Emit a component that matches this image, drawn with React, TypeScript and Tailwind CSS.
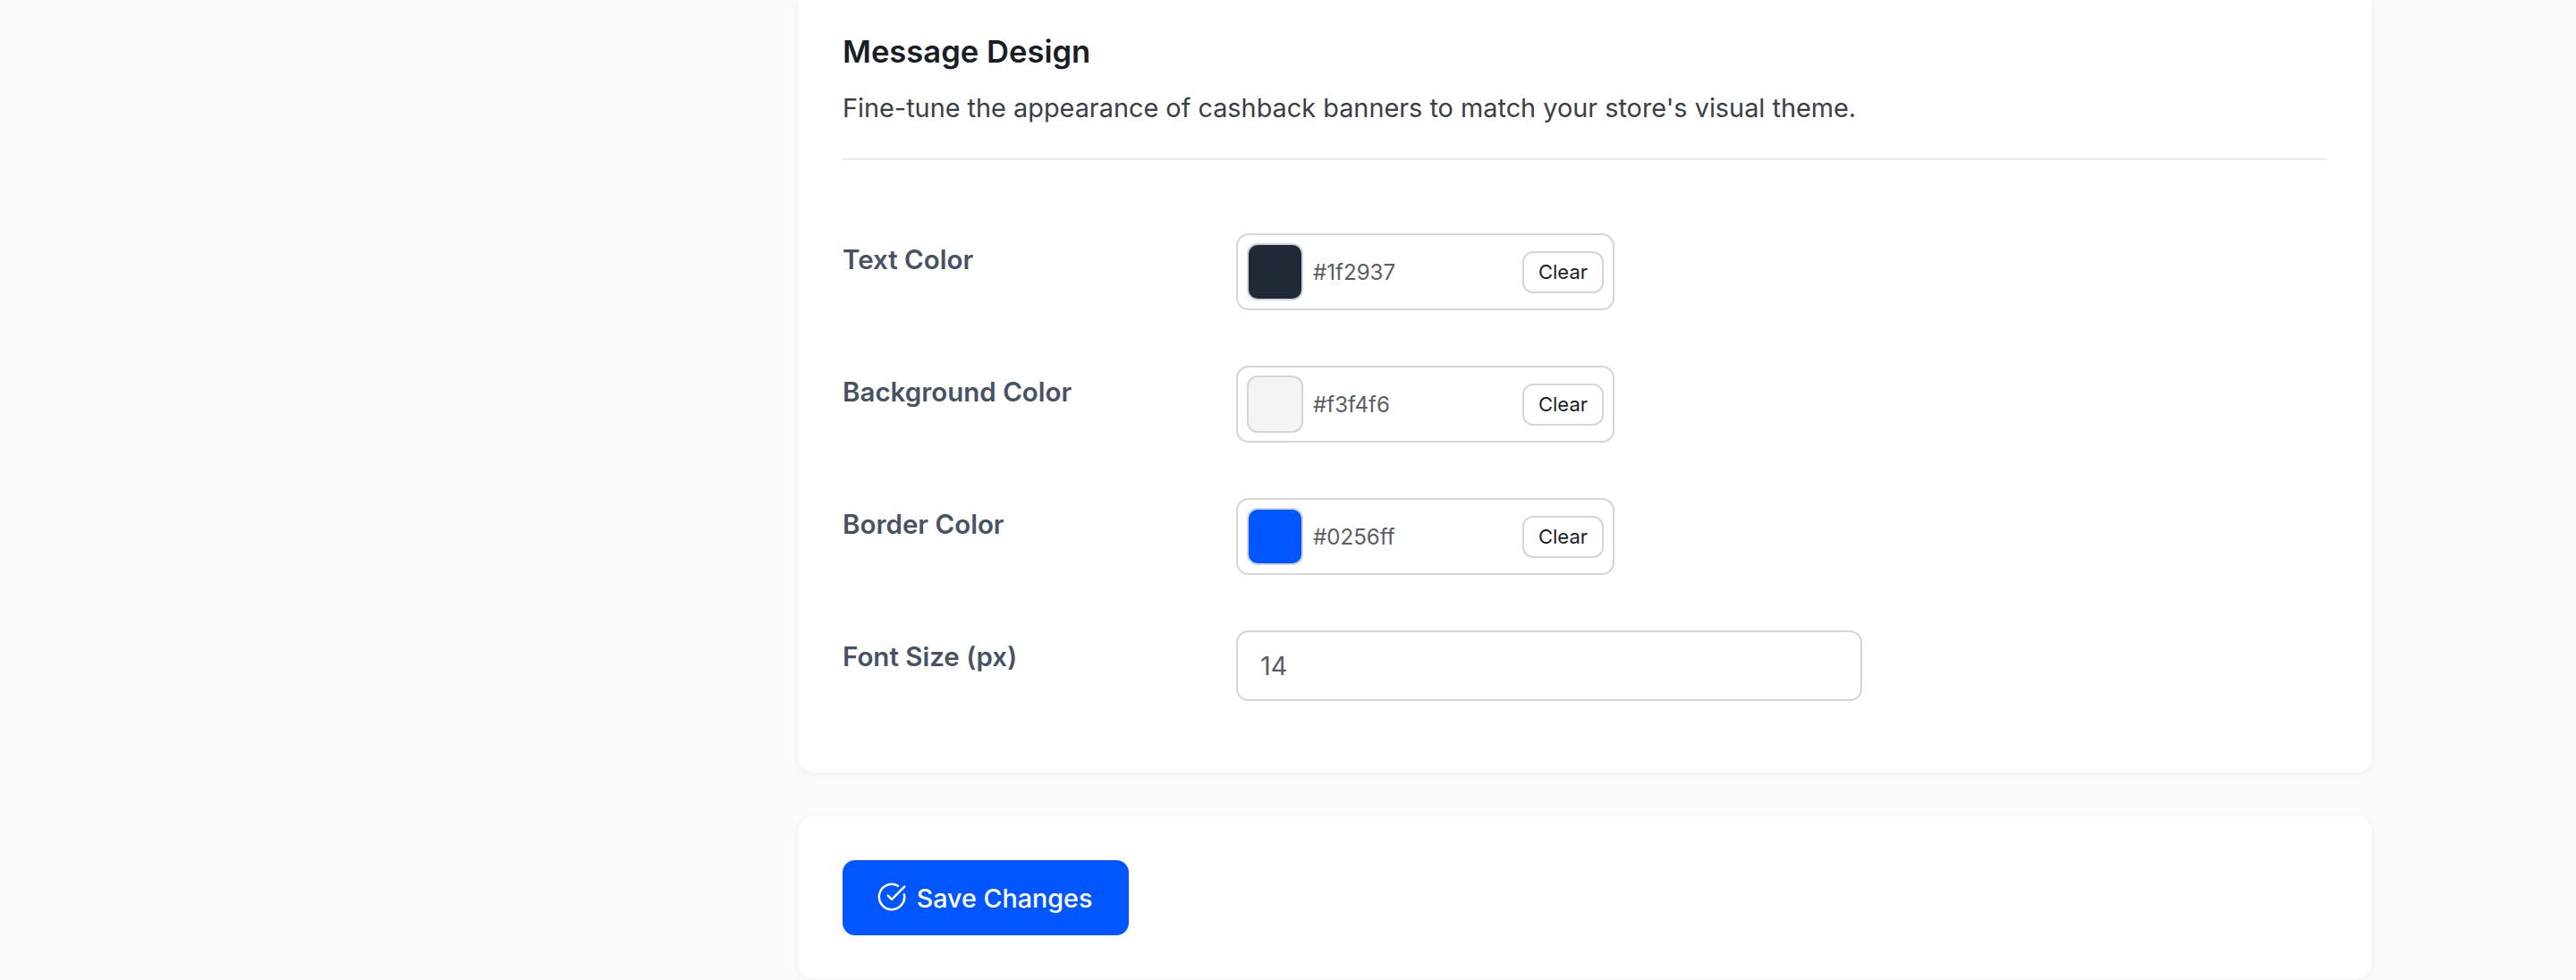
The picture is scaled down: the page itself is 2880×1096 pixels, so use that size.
import { CircleCheckBig } from 'lucide-react';

const COLOR_ROWS = [
  { label: 'Text Color', value: '#1f2937', swatch: 'bg-[#1f2937]' },
  { label: 'Background Color', value: '#f3f4f6', swatch: 'bg-[#f3f4f6]' },
  { label: 'Border Color', value: '#0256ff', swatch: 'bg-[#0256ff]' },
];

const FONT = "font-['Inter',sans-serif]";

function FieldLabel({ children }: { children: string }) {
  return (
    <label className="block w-[440px] shrink-0 pt-[9px] text-[29.5px] leading-[40px] font-semibold text-[#475264]">
      {children}
    </label>
  );
}

export default function App() {
  return (
    <div className={`h-[1096px] overflow-hidden bg-[#f9fbfc] pl-[892px] ${FONT}`}>
      <div className="flex w-[1760px] flex-col gap-[49px]">
        {/* Design settings */}
        <section className="rounded-b-[18px] bg-white pt-[34px] pr-[51px] pb-[80px] pl-[50px] shadow-[0_2px_8px_rgba(0,0,0,0.05)]">
          <h2 className="text-[34.6px] leading-[46px] font-semibold text-[#1a1f26]">Message Design</h2>
          <p className="mt-[17px] text-[28.85px] leading-[48px] text-[#3a3f47]">
            Fine-tune the appearance of cashback banners to match your store's visual theme.
          </p>
          <div className="mt-[32px] h-[2px] bg-[#e9ebee]" />

          <div className="mt-[82px] flex flex-col gap-[62px]">
            {COLOR_ROWS.map((row) => (
              <div key={row.label} className="flex items-start">
                <FieldLabel>{row.label}</FieldLabel>
                <div className="flex h-[86px] w-[423px] items-center rounded-[14px] border-2 border-[#d4d5d7] bg-white px-[10px]">
                  <div className={`h-[64px] w-[63px] rounded-[12px] border-2 border-[#d1d5db] ${row.swatch}`} />
                  <span className="mt-[2px] ml-[11px] text-[24.1px] text-[#5a5d63]">{row.value}</span>
                  <button className="ml-auto h-[47px] w-[91px] rounded-[12px] border-2 border-[#d4d5d7] bg-white text-[22px] text-[#1a1f26]">
                    Clear
                  </button>
                </div>
              </div>
            ))}
            <div className="flex items-start">
              <FieldLabel>Font Size (px)</FieldLabel>
              <input
                readOnly
                value="14"
                className="h-[79px] w-[700px] rounded-[14px] border-2 border-[#d4d5d7] bg-white px-[25px] text-[28.85px] text-[#5a5d63] outline-none"
              />
            </div>
          </div>
        </section>

        {/* Save bar */}
        <section className="rounded-[18px] bg-white py-[49px] pr-[51px] pl-[50px] shadow-[0_2px_8px_rgba(0,0,0,0.05)]">
          <button className="flex h-[84px] w-[320px] items-center justify-center gap-[11px] rounded-[14px] bg-[#0256ff] pr-[3px] text-[28.7px] font-medium text-white">
            <CircleCheckBig className="mb-[2px] h-[34px] w-[34px]" strokeWidth={1.75} />
            <span className="mt-[2px]">Save Changes</span>
          </button>
        </section>
      </div>
    </div>
  );
}
